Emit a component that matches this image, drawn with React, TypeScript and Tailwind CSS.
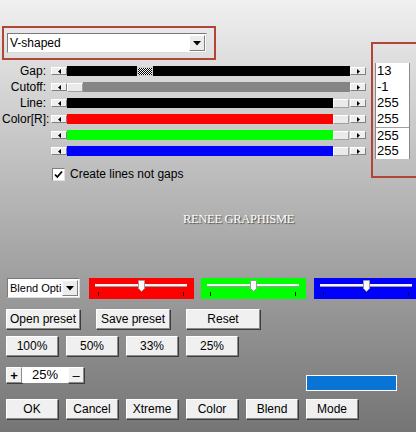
import React from "react";

// bevelled push button look
const bevel =
  "bg-[#f0f0f0] border border-t-white border-l-white border-r-[#8a8a8a] border-b-[#8a8a8a] shadow-[1px_1px_0_#3c3c3c]";

function Tri({ dir }: { dir: "left" | "right" | "down" }) {
  if (dir === "down")
    return (
      <svg width="8" height="5" viewBox="0 0 8 5">
        <path d="M0 0h8L4 4.5z" fill="#000" />
      </svg>
    );
  if (dir === "left")
    return (
      <svg width="3" height="5" viewBox="0 0 3 5">
        <path d="M3 0v5L0 2.5z" fill="#000" />
      </svg>
    );
  return (
    <svg width="3" height="5" viewBox="0 0 3 5">
      <path d="M0 0v5l3-2.5z" fill="#000" />
    </svg>
  );
}

function ScrollBtn({ dir }: { dir: "left" | "right" }) {
  return (
    <div className="w-[16px] h-[8px] flex items-center justify-center bg-[#eeeeee] border border-t-white border-l-white border-r-[#808080] border-b-[#808080]">
      <Tri dir={dir} />
    </div>
  );
}

function Thumb() {
  return (
    <div className="w-[16px] h-[9px] bg-[#eaeaea] border border-t-white border-l-white border-r-[#a0a0a0] border-b-[#a0a0a0]" />
  );
}

type Row = { label: string; kind: "gap" | "cutoff" | "color"; color?: string };

const rows: Row[] = [
  { label: "Gap:", kind: "gap" },
  { label: "Cutoff:", kind: "cutoff" },
  { label: "Line:", kind: "color", color: "bg-black" },
  { label: "Color[R]:", kind: "color", color: "bg-[#ff0000]" },
  { label: "", kind: "color", color: "bg-[#00ff00]" },
  { label: "", kind: "color", color: "bg-[#0000ff]" },
];

function SliderRow({ row }: { row: Row }) {
  return (
    <div className="flex items-center h-[16px]">
      <div className="w-[44px] text-right text-[12px] text-black leading-none">{row.label}</div>
      <div className="ml-[5px] w-[315px] flex items-center">
        <ScrollBtn dir="left" />
        <div className="flex-1 h-[10px] flex items-center">
          {row.kind === "gap" && (
            <>
              <div className="w-[70px] h-full bg-black" />
              <div className="w-[16px] h-[9px] bg-[repeating-conic-gradient(#000_0_25%,#fff_0_50%)] bg-[length:2px_2px] border border-[#ccc]" />
              <div className="flex-1 h-full bg-black" />
            </>
          )}
          {row.kind === "cutoff" && (
            <>
              <Thumb />
              <div className="flex-1 h-full bg-[#858585]" />
            </>
          )}
          {row.kind === "color" && (
            <>
              <div className={`flex-1 h-full ${row.color}`} />
              <Thumb />
              <div className="w-[1px]" />
            </>
          )}
        </div>
        <ScrollBtn dir="right" />
      </div>
    </div>
  );
}

function ColorSlider({ bg, thumb, w }: { bg: string; thumb: number; w: string }) {
  return (
    <div className={`${bg} ${w} h-[21px] shrink-0 pt-[4px] pl-[6px]`}>
      <div className="relative w-[92px] h-[14px]">
        <div className="absolute left-0 right-0 top-[2px] h-[3px] bg-[#f4f4f4] border-b border-[#9a9a9a]" />
        <svg
          className="absolute top-[-2px]"
          style={{ left: thumb }}
          width="7"
          height="12"
          viewBox="0 0 7 12"
        >
          <path d="M0.5 0.5h6v8l-3 3l-3-3z" fill="#fafafa" stroke="#9a9a9a" />
        </svg>
        <div className="absolute left-[3px] top-[10px] w-[1px] h-[4px] bg-black" />
        <div className="absolute left-[88px] top-[10px] w-[1px] h-[4px] bg-black" />
      </div>
    </div>
  );
}

function Btn({ label, w }: { label: string; w: string }) {
  return (
    <div className={`${bevel} ${w} h-[20px] flex items-center justify-center text-[12px] text-black`}>
      {label}
    </div>
  );
}

export default function App() {
  const nums = ["13", "-1", "255", "255", "255", "255"];

  return (
    <div className="w-[416px] h-[432px] overflow-hidden bg-gradient-to-b from-[#f0f0f0] to-[#757575] font-['Liberation_Sans',Arial,sans-serif] text-black">
      {/* top: preset dropdown, sliders, number fields */}
      <div className="flex h-[190px]">
        <div className="w-[369px] shrink-0 pt-[26px] pl-[2px]">
          <div className="w-[214px] h-[34px] border-2 border-[#b04538] pt-[5px] pl-[3px]">
            <div className="w-[200px] h-[20px] bg-white border border-t-[#7a7a7a] border-l-[#7a7a7a] border-r-[#dcdcdc] border-b-[#dcdcdc] flex items-center">
              <span className="pl-[2px] text-[12px] flex-1">V-shaped</span>
              <div className="w-[16px] h-[16px] mr-[1px] flex items-center justify-center bg-[#ececec] border border-t-white border-l-white border-r-[#808080] border-b-[#808080]">
                <Tri dir="down" />
              </div>
            </div>
          </div>

          <div className="mt-[3px]">
            {rows.map((r, i) => (
              <SliderRow key={i} row={r} />
            ))}
          </div>

          <div className="mt-[6px] pl-[50px] flex items-center gap-[5px]">
            <div className="w-[13px] h-[13px] bg-white border border-t-[#808080] border-l-[#808080] border-r-[#e0e0e0] border-b-[#e0e0e0] flex items-center justify-center">
              <svg width="9" height="9" viewBox="0 0 9 9">
                <path d="M1 4.5l2.3 2.5L8 1.5" stroke="#000" strokeWidth="1.8" fill="none" />
              </svg>
            </div>
            <span className="text-[12px]">Create lines not gaps</span>
          </div>
        </div>

        <div className="pt-[42px] pl-[2px]">
          <div className="w-[50px] h-[136px] border-2 border-r-0 border-[#b04538] pt-[19px] pl-[2px]">
            <div className="w-[35px] border-x border-[#8a8a8a]">
              {nums.map((n, i) => (
                <div
                  key={i}
                  className={`h-[16px] bg-white pl-[1px] text-[13px] leading-[16px] ${i === 4 ? "border-t border-[#a0a0a0]" : ""}`}
                >
                  {n}
                </div>
              ))}
            </div>
          </div>
        </div>
      </div>

      {/* watermark */}
      <div className="mt-[20px] h-[16px] pl-[183px] font-['Liberation_Serif',serif] text-[12.5px] text-white [text-shadow:1px_1px_1px_#4a4a4a] tracking-[-0.3px]">
        RENEE GRAPHISME
      </div>

      {/* blend options + channel sliders */}
      <div className="mt-[52px] pl-[7px] flex items-start">
        <div className="w-[73px] h-[20px] bg-white border border-t-[#7a7a7a] border-l-[#7a7a7a] border-r-[#dcdcdc] border-b-[#dcdcdc] flex items-center shrink-0">
          <span className="pl-[2px] text-[11px] flex-1 whitespace-nowrap">Blend Opti</span>
          <div className="w-[16px] h-[16px] mr-[1px] shrink-0 flex items-center justify-center bg-[#ececec] border border-t-white border-l-white border-r-[#808080] border-b-[#808080]">
            <Tri dir="down" />
          </div>
        </div>
        <div className="ml-[9px]">
          <ColorSlider bg="bg-[#ff0000]" thumb={43} w="w-[105px]" />
        </div>
        <div className="ml-[7px]">
          <ColorSlider bg="bg-[#00ff00]" thumb={43} w="w-[105px]" />
        </div>
        <div className="ml-[8px]">
          <ColorSlider bg="bg-[#0000ff]" thumb={43} w="w-[105px]" />
        </div>
      </div>

      {/* presets */}
      <div className="mt-[10px] pl-[6px] flex gap-[16px]">
        <Btn label="Open preset" w="w-[74px]" />
        <Btn label="Save preset" w="w-[74px]" />
        <Btn label="Reset" w="w-[74px]" />
      </div>

      <div className="mt-[7px] pl-[6px] flex gap-[8px]">
        <Btn label="100%" w="w-[52px]" />
        <Btn label="50%" w="w-[52px]" />
        <Btn label="33%" w="w-[52px]" />
        <Btn label="25%" w="w-[52px]" />
      </div>

      {/* zoom field + colour swatch */}
      <div className="mt-[11px] pl-[6px] flex items-start h-[24px]">
        <div className={`${bevel} w-[16px] h-[16px] flex items-center justify-center text-[13px] font-bold leading-none`}>+</div>
        <div className="w-[46px] h-[16px] bg-white text-[13px] leading-[16px] text-center">25%</div>
        <div className={`${bevel} w-[16px] h-[16px] flex items-center justify-center text-[13px] leading-none`}>–</div>
        <div className="ml-[222px] mt-[8px] w-[91px] h-[16px] bg-[#0a74d6] border border-white" />
      </div>

      {/* dialog buttons */}
      <div className="mt-[8px] pl-[6px] flex gap-[8px]">
        {["OK", "Cancel", "Xtreme", "Color", "Blend", "Mode"].map((b) => (
          <Btn key={b} label={b} w="w-[52px]" />
        ))}
      </div>
    </div>
  );
}
